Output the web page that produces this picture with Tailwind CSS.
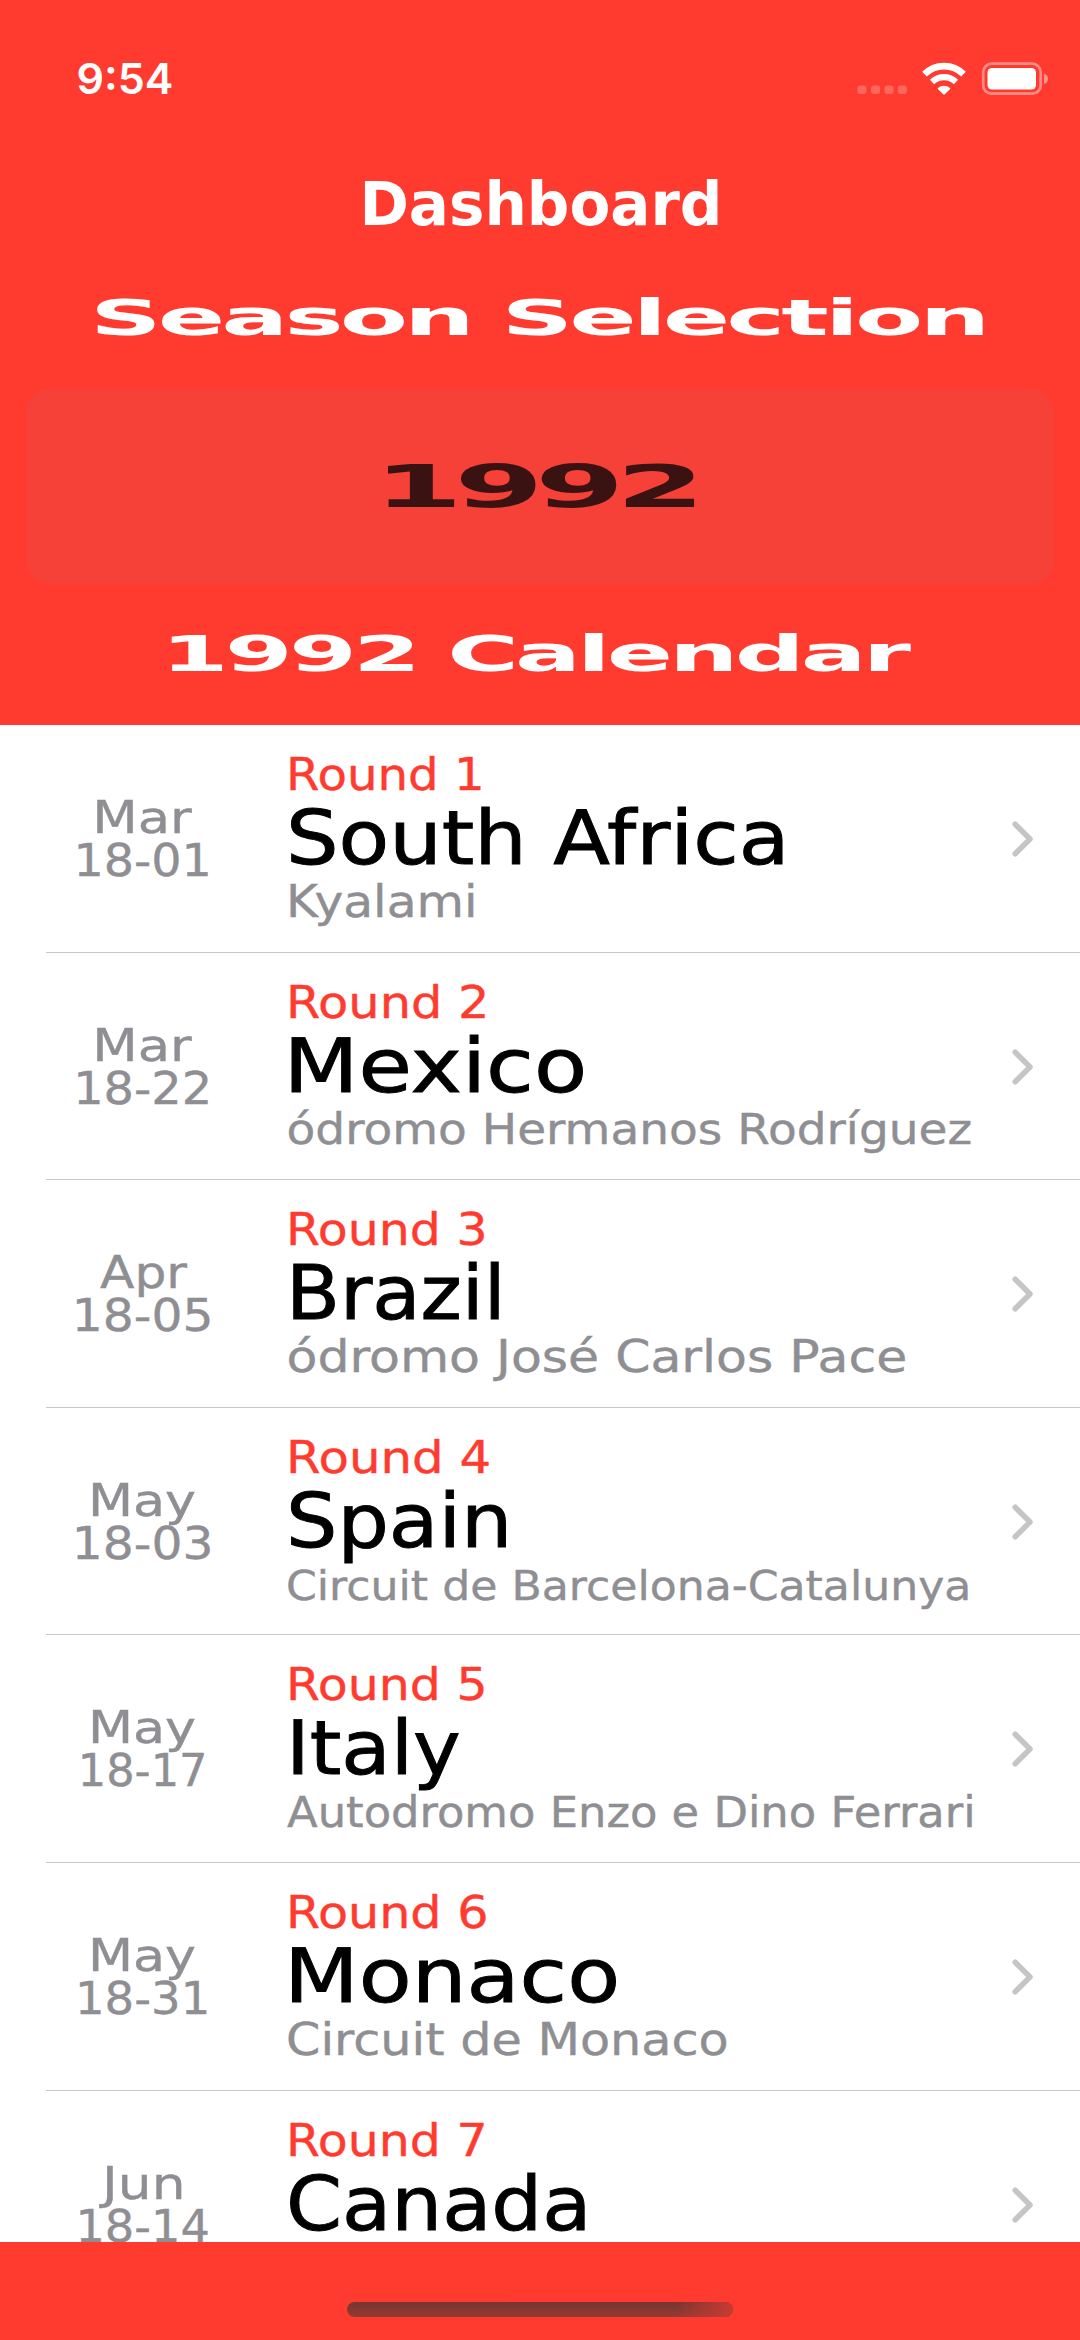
<!DOCTYPE html>
<html lang="en">
<head>
<meta charset="utf-8">
<title>Dashboard</title>
<script src="https://cdn.jsdelivr.net/npm/@tailwindcss/browser@4"></script>
</head>
<body class="bg-white">
<div class="flex flex-col w-[1080px] h-[2340px] overflow-hidden bg-[#ff3b30] font-['DejaVu_Sans',sans-serif] whitespace-nowrap">
  <header class="flex flex-col shrink-0 h-[725px] text-white font-bold">
    <div class="flex items-start h-[164px] pt-[54px] pl-[76.5px]">
      <span class="w-[780px] text-[43px] leading-[48px] font-semibold font-['Inter',sans-serif]">9:54</span>
      <svg class="w-[200px] h-[48px]" viewBox="0 0 200 48" fill="none">
        <g fill="#fff" fill-opacity=".22">
          <rect x=".5" y="31.5" width="9" height="8.5" rx="2.7"/>
          <rect x="14" y="31.5" width="9" height="8.5" rx="2.7"/>
          <rect x="27.5" y="31.5" width="9" height="8.5" rx="2.7"/>
          <rect x="40.8" y="31.5" width="9" height="8.5" rx="2.7"/>
        </g>
        <g stroke="#fff">
          <path d="M67.5 20.2a27.6 27.6 0 0 1 39 0" stroke-width="6.6"/>
          <path d="M75 28a17.4 17.4 0 0 1 24 0" stroke-width="6.2"/>
        </g>
        <path d="M81 34a9.5 9.5 0 0 1 12 0q.6.6 0 1.200l-5.200 5q-.8.700-1.600 0l-5.200-5q-.6-.6 0-1.200z" fill="#fff"/>
        <rect x="126.200" y="9.700" width="57.500" height="30" rx="8.500" stroke="#fff" stroke-opacity=".42" stroke-width="2.700"/>
        <rect x="130.500" y="14" width="48.500" height="21.500" rx="4.500" fill="#fff"/>
        <path d="M187 19.500q4 1.500 4 5.300t-4 5.300z" fill="#fff" fill-opacity=".45"/>
      </svg>
    </div>
    <h1 class="flex justify-center h-[114px] text-[60px] leading-[80px]"><span class="translate-x-px scale-x-[0.992]">Dashboard</span></h1>
    <h2 class="flex justify-center h-[111px] text-[50px] leading-[80px] tracking-[-2px]"><span class="-translate-x-[2px] scale-x-[1.99]">Season Selection</span></h2>
    <button class="flex items-center justify-center mx-[26px] h-[195px] shrink-0 rounded-[24px] bg-[#f64138] text-[59px] leading-[80px] tracking-[-4px] text-[#3a1212]"><span class="-translate-x-[5px] scale-x-[2.18]">1992</span></button>
    <h2 class="flex justify-center pt-[30px] text-[50px] leading-[80px] tracking-[-2px]"><span class="-translate-x-[6px] scale-x-[1.955]">1992 Calendar</span></h2>
  </header>

  <main class="h-[1517px] shrink-0 overflow-hidden bg-white text-[44.5px] text-[#8e8e93] [-webkit-text-stroke:0.4px]">
    <article class="h-[227.6px] flex flex-col">
      <div class="grow flex">
        <div class="w-[286px] pt-[71px] flex flex-col items-center leading-[43px]"><span class="-translate-x-px scale-x-[1.185]">Mar</span><span class="scale-x-[1.07]">18-01</span></div>
        <div class="w-[726px] pt-[26px] flex flex-col items-start leading-[49px]"><span class="origin-left scale-x-[1.085] text-[#ff3b30] leading-[48px]">Round 1</span><span class="origin-left scale-x-[1.12] text-[74px] leading-[78px] text-black [-webkit-text-stroke:0.9px]">South Africa</span><span class="origin-left scale-x-[1.095]">Kyalami</span></div>
        <svg class="w-[22px] h-[36px] mt-[96px]" viewBox="0 0 22 36" fill="none" stroke="#c5c5c7" stroke-width="5.500" stroke-linecap="round" stroke-linejoin="round"><path d="M3.200 3.200 18 18 3.200 32.800"/></svg>
      </div>
      <div class="ml-[46px] h-px shrink-0 bg-[#c8c8ca]"></div>
    </article>
    <article class="h-[227.6px] flex flex-col">
      <div class="grow flex">
        <div class="w-[286px] pt-[71px] flex flex-col items-center leading-[43px]"><span class="-translate-x-px scale-x-[1.185]">Mar</span><span class="scale-x-[1.075]">18-22</span></div>
        <div class="w-[726px] pt-[26px] flex flex-col items-start leading-[50px]"><span class="origin-left scale-x-[1.11] text-[#ff3b30] leading-[48px]">Round 2</span><span class="origin-left -translate-x-[2.5px] scale-x-[1.175] text-[74px] leading-[78px] text-black [-webkit-text-stroke:0.9px]">Mexico</span><span class="origin-left translate-x-[0.5px] scale-x-[1.12] text-[42px]">ódromo Hermanos Rodríguez</span></div>
        <svg class="w-[22px] h-[36px] mt-[96px]" viewBox="0 0 22 36" fill="none" stroke="#c5c5c7" stroke-width="5.500" stroke-linecap="round" stroke-linejoin="round"><path d="M3.200 3.200 18 18 3.200 32.800"/></svg>
      </div>
      <div class="ml-[46px] h-px shrink-0 bg-[#c8c8ca]"></div>
    </article>
    <article class="h-[227.6px] flex flex-col">
      <div class="grow flex">
        <div class="w-[286px] pt-[71px] flex flex-col items-center leading-[43px]"><span class="scale-x-[1.13]">Apr</span><span class="scale-x-[1.095]">18-05</span></div>
        <div class="w-[726px] pt-[26px] flex flex-col items-start leading-[50px]"><span class="origin-left scale-x-[1.1] text-[#ff3b30] leading-[48px]">Round 3</span><span class="origin-left scale-x-[1.063] text-[74px] leading-[78px] text-black [-webkit-text-stroke:0.9px]">Brazil</span><span class="origin-left translate-x-[0.5px] scale-x-[1.147] text-[44px]">ódromo José Carlos Pace</span></div>
        <svg class="w-[22px] h-[36px] mt-[96px]" viewBox="0 0 22 36" fill="none" stroke="#c5c5c7" stroke-width="5.500" stroke-linecap="round" stroke-linejoin="round"><path d="M3.200 3.200 18 18 3.200 32.800"/></svg>
      </div>
      <div class="ml-[46px] h-px shrink-0 bg-[#c8c8ca]"></div>
    </article>
    <article class="h-[227.6px] flex flex-col">
      <div class="grow flex">
        <div class="w-[286px] pt-[71px] flex flex-col items-center leading-[43px]"><span class="-translate-x-px scale-x-[1.175]">May</span><span class="scale-x-[1.095]">18-03</span></div>
        <div class="w-[726px] pt-[26px] flex flex-col items-start leading-[52px]"><span class="origin-left scale-x-[1.12] text-[#ff3b30] leading-[48px]">Round 4</span><span class="origin-left scale-x-[1.095] text-[74px] leading-[78px] text-black [-webkit-text-stroke:0.9px]">Spain</span><span class="origin-left scale-x-[1.077] text-[41px]">Circuit de Barcelona-Catalunya</span></div>
        <svg class="w-[22px] h-[36px] mt-[96px]" viewBox="0 0 22 36" fill="none" stroke="#c5c5c7" stroke-width="5.500" stroke-linecap="round" stroke-linejoin="round"><path d="M3.200 3.200 18 18 3.200 32.800"/></svg>
      </div>
      <div class="ml-[46px] h-px shrink-0 bg-[#c8c8ca]"></div>
    </article>
    <article class="h-[227.6px] flex flex-col">
      <div class="grow flex">
        <div class="w-[286px] pt-[71px] flex flex-col items-center leading-[43px]"><span class="-translate-x-px scale-x-[1.175]">May</span><span class="scale-x-[1.003]">18-17</span></div>
        <div class="w-[726px] pt-[26px] flex flex-col items-start leading-[52px]"><span class="origin-left scale-x-[1.1] text-[#ff3b30] leading-[48px]">Round 5</span><span class="origin-left scale-x-[1.088] text-[74px] leading-[78px] text-black [-webkit-text-stroke:0.9px]">Italy</span><span class="origin-left translate-x-px scale-x-[1.067] text-[42px]">Autodromo Enzo e Dino Ferrari</span></div>
        <svg class="w-[22px] h-[36px] mt-[96px]" viewBox="0 0 22 36" fill="none" stroke="#c5c5c7" stroke-width="5.500" stroke-linecap="round" stroke-linejoin="round"><path d="M3.200 3.200 18 18 3.200 32.800"/></svg>
      </div>
      <div class="ml-[46px] h-px shrink-0 bg-[#c8c8ca]"></div>
    </article>
    <article class="h-[227.6px] flex flex-col">
      <div class="grow flex">
        <div class="w-[286px] pt-[71px] flex flex-col items-center leading-[43px]"><span class="-translate-x-px scale-x-[1.175]">May</span><span class="scale-x-[1.047]">18-31</span></div>
        <div class="w-[726px] pt-[26px] flex flex-col items-start leading-[50px]"><span class="origin-left scale-x-[1.105] text-[#ff3b30] leading-[48px]">Round 6</span><span class="origin-left -translate-x-[2px] scale-x-[1.17] text-[74px] leading-[78px] text-black [-webkit-text-stroke:0.9px]">Monaco</span><span class="origin-left scale-x-[1.107]">Circuit de Monaco</span></div>
        <svg class="w-[22px] h-[36px] mt-[96px]" viewBox="0 0 22 36" fill="none" stroke="#c5c5c7" stroke-width="5.500" stroke-linecap="round" stroke-linejoin="round"><path d="M3.200 3.200 18 18 3.200 32.800"/></svg>
      </div>
      <div class="ml-[46px] h-px shrink-0 bg-[#c8c8ca]"></div>
    </article>
    <article class="h-[227.6px] flex">
      <div class="w-[286px] pt-[71px] flex flex-col items-center leading-[43px]"><span class="translate-x-px scale-x-[1.2]">Jun</span><span class="scale-x-[1.04]">18-14</span></div>
      <div class="w-[726px] pt-[26px] flex flex-col items-start leading-[48px]"><span class="origin-left scale-x-[1.1] text-[#ff3b30]">Round 7</span><span class="origin-left scale-x-[1.085] text-[74px] leading-[78px] text-black [-webkit-text-stroke:0.9px]">Canada</span></div>
      <svg class="w-[22px] h-[36px] mt-[96px]" viewBox="0 0 22 36" fill="none" stroke="#c5c5c7" stroke-width="5.500" stroke-linecap="round" stroke-linejoin="round"><path d="M3.200 3.200 18 18 3.200 32.800"/></svg>
    </article>
  </main>

  <footer class="flex grow justify-center pt-[60px]">
    <div class="w-[386px] h-[15px] rounded-full overflow-hidden bg-linear-to-b from-[#763632] to-[#963832]">
      <div class="h-full bg-linear-to-r from-[#c83a33]/0 from-85% to-[#c83a33]"></div>
    </div>
  </footer>
</div>
</body>
</html>
